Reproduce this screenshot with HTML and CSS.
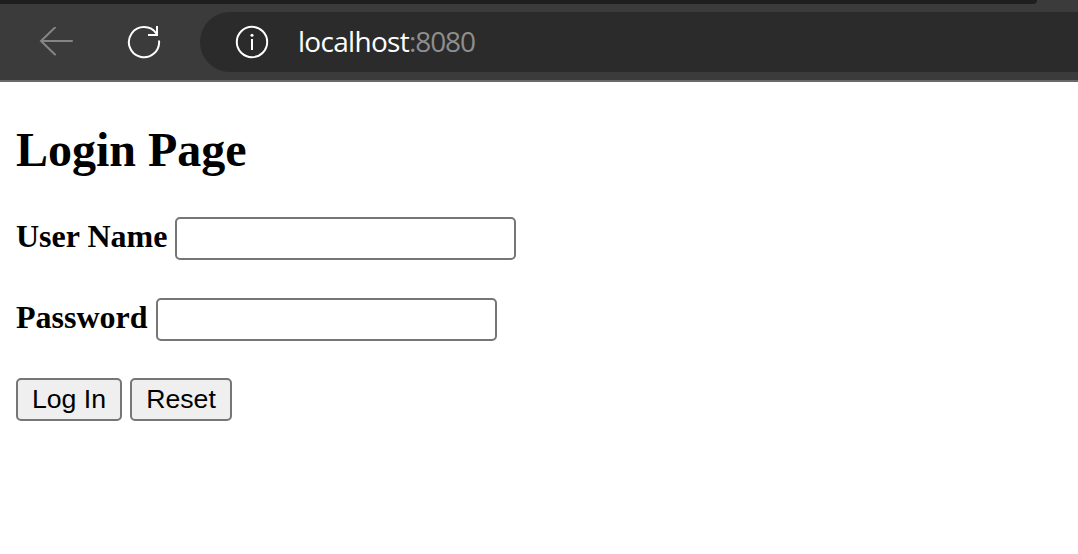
FILE: index.html
```html
<!DOCTYPE html>
<html lang="en">
<head>
<meta charset="utf-8">
<title>Login Page</title>
<link rel="stylesheet" href="styles.css">
</head>
<body>
<header class="browser">
  <div class="tab-strip"></div>
  <div class="toolbar">
    <svg class="back" width="34" height="30" viewBox="0 0 34 30"><path d="M33 14H2M16 .5L2 14l14 13.500"/></svg>
    <svg class="reload" width="34" height="34" viewBox="0 0 34 34"><path d="M32 15.500A15.100 15.100 0 1 1 29.500 8.700M30 1v9H21"/></svg>
    <div class="address">
      <svg class="info" width="34" height="34" viewBox="0 0 34 34"><circle cx="17" cy="17" r="15.200"/><path d="M17 14v11"/><circle class="dot" cx="17" cy="10.300" r="1.500"/></svg>
      <span class="url">localhost<span class="port">:8080</span></span>
    </div>
  </div>
</header>
<main class="page">
  <h1 class="title">Login Page</h1>
  <form class="form">
    <div class="row"><label class="label" for="user">User Name</label><input class="field" id="user" type="text"></div>
    <div class="row"><label class="label" for="pass">Password</label><input class="field" id="pass" type="password"></div>
    <div class="row actions"><button class="button login" type="button">Log In</button><button class="button reset" type="reset">Reset</button></div>
  </form>
</main>
</body>
</html>
```
FILE: styles.css
```css
* { box-sizing: border-box; }
body { margin: 0; background: #fff; color: #000; overflow: hidden; }
.browser { height: 82px; background: #3b3b3b; border-bottom: 2px solid #6b686a; }
.tab-strip { width: 1037px; height: 4px; background: #1e1e1e; border-radius: 0 0 6px 0; }
.toolbar { display: flex; align-items: center; height: 76px; padding-left: 39px; }
svg { fill: none; stroke: #fff; stroke-width: 2; flex: none; }
.back { stroke: #858585; stroke-linecap: round; }
.reload { margin-left: 54px; }
.address { display: flex; align-items: center; flex: 1; height: 60px; margin-left: 39px; padding-left: 35px; background: #2b2b2b; border-radius: 30px 0 0 30px; }
.info .dot { fill: #fff; stroke: none; }
.url { margin-left: 29px; padding-bottom: 2px; color: #fff; font: 28px/38px "Open Sans", sans-serif; letter-spacing: -.7px; }
.port { color: #8e8e8e; letter-spacing: -1.1px; }
.page { padding: 41px 16px 0; font-family: "Liberation Serif", serif; }
.title { margin: 0; font-size: 48px; line-height: 54px; }
.form { display: flex; flex-direction: column; gap: 38px; margin-top: 40px; }
.row { display: flex; height: 43px; gap: 8px; }
.actions { margin-top: -1px; }
.label { font-size: 32px; line-height: 38px; font-weight: bold; }
.field { width: 341px; height: 43px; border: 2px solid #767676; border-radius: 5px; background: #fff; }
.button { height: 43px; padding: 0 0 1px; border: 2px solid #767676; border-radius: 5px; background: #efefef; color: #000; font: 26.667px "Liberation Sans", sans-serif; }
.login { width: 106px; }
.reset { width: 102px; }
```
